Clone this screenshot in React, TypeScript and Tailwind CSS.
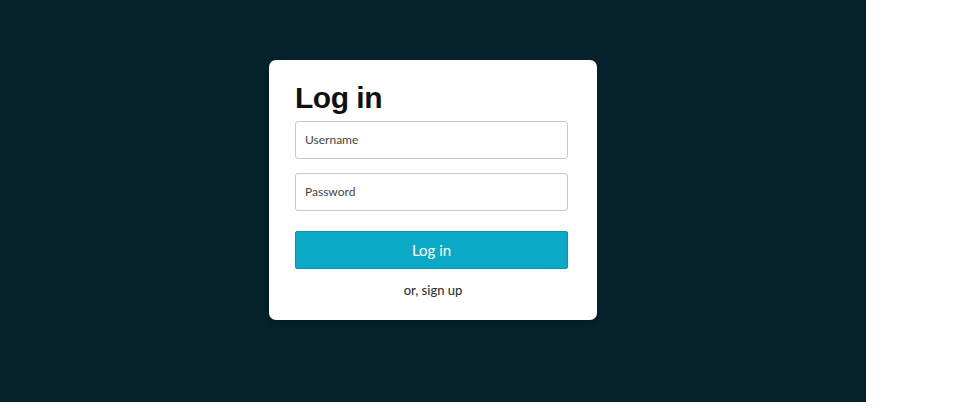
export default function App() {
  return (
    <div className="w-[980px] h-[408px] bg-white">
      <div className="w-[866px] h-[402px] bg-[#05212b] flex justify-center pt-[60px]">
        <div className="w-[328px] h-[260px] bg-white rounded-[7px] shadow-md px-[26px] pt-[18px] flex flex-col">
          <h1 className="text-[30px] leading-[40px] font-bold text-[#111] font-['Liberation_Sans',Arial,sans-serif] tracking-[-0.5px]">
            Log in
          </h1>
          <div className="mt-[3px] flex flex-col gap-[14px]">
            <div className="h-[38px] w-[273px] border border-[#c9c9c9] rounded-[3px] flex items-center px-[9px] text-[12px] text-[#444] font-['Lato',sans-serif]">
              Username
            </div>
            <div className="h-[38px] w-[273px] border border-[#c9c9c9] rounded-[3px] flex items-center px-[9px] text-[12px] text-[#444] font-['Lato',sans-serif]">
              Password
            </div>
          </div>
          <button className="mt-[20px] h-[38px] w-[273px] bg-[#0aa9c5] border border-[#0896ae] rounded-[2px] text-white text-[15px] font-['Lato',sans-serif]">
            Log in
          </button>
          <div className="mt-[12px] text-center text-[13px] font-medium text-[#333] font-['Lato',sans-serif]">
            or, sign up
          </div>
        </div>
      </div>
    </div>
  );
}
